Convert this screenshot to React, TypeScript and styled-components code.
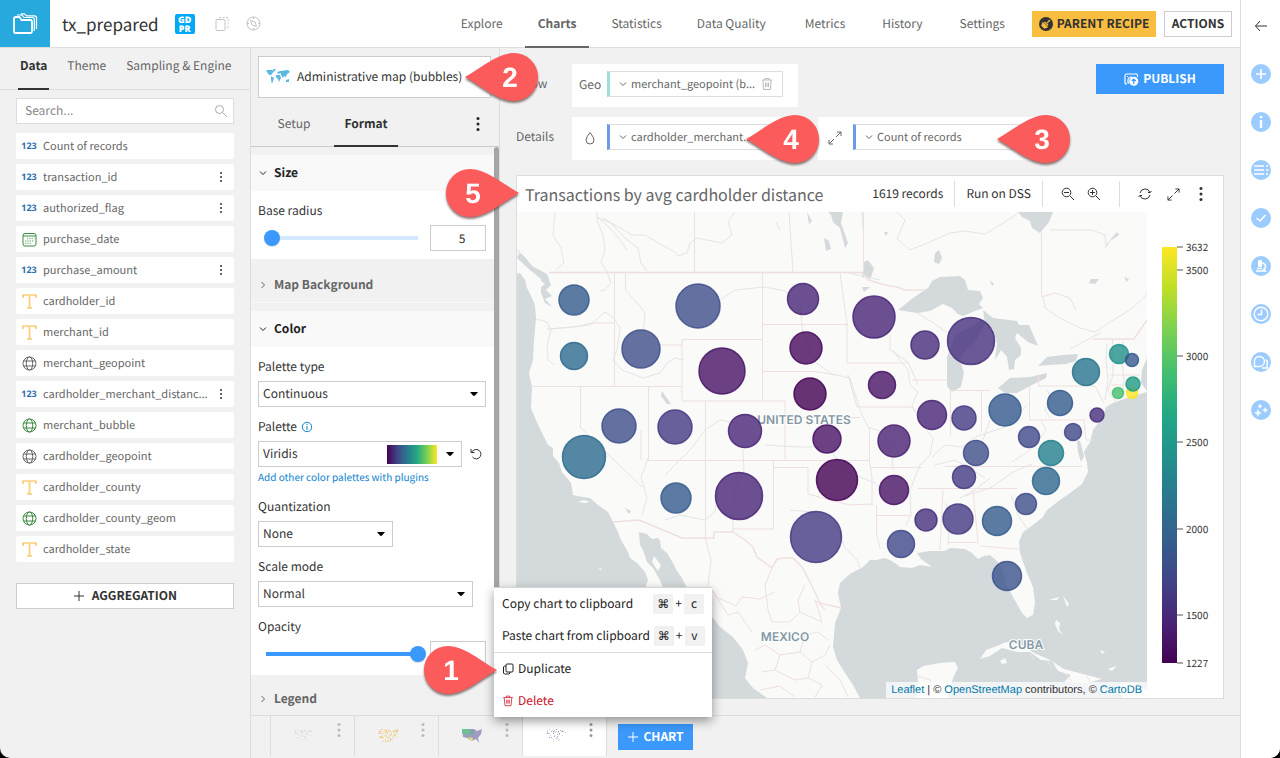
import React from "react";
import styled, { createGlobalStyle, css } from "styled-components";

const sans = `"Noto Sans CJK SC", "Open Sans", sans-serif`;
const line = "#dddddd";
const blue = "#3b99fc";

const GlobalStyle = createGlobalStyle`
  *, *::before, *::after { box-sizing: border-box; }
  body { margin: 0; background: #000; font-family: ${sans}; font-size: 12px; line-height: 20px; color: #666; text-rendering: geometricPrecision; }
  button, input, select { font: inherit; color: inherit; margin: 0; text-rendering: inherit; }
  a { text-decoration: none; }
`;

/* ---------- page frame ---------- */
const Shell = styled.div`
  position: relative;
  display: flex;
  min-height: 100vh;
  overflow: hidden;
  border-radius: 0 0 10px 10px;
  background: #f1f1f1;
`;
const Workspace = styled.div`
  flex: 1;
  min-width: 0;
  display: flex;
  flex-direction: column;
`;
const Body = styled.div`
  flex: 1;
  display: flex;
`;
const RightSide = styled.div`
  flex: 1;
  min-width: 0;
  display: flex;
  flex-direction: column;
`;
const Columns = styled.div`
  flex: 1;
  display: flex;
`;

/* ---------- header ---------- */
const Header = styled.header`
  display: flex;
  align-items: center;
  height: 48px;
  padding-right: 8px;
  background: #fff;
  border-bottom: 1px solid ${line};
`;
const Logo = styled.a`
  display: grid;
  place-items: center;
  width: 50px;
  height: 47px;
  background: #28a9dd;
`;
const Title = styled.h1`
  margin: 0 16px 0 12px;
  font-size: 17px;
  font-weight: 400;
  line-height: 28px;
  color: #333;
`;
const Tag = styled.span`
  width: 20px;
  height: 20px;
  padding-top: 1px;
  border-radius: 2px;
  background: #03a9f4;
  color: #fff;
  font: 800 9px/9px "Open Sans", sans-serif;
  text-align: center;
`;
const HeaderIcons = styled.div`
  display: flex;
  gap: 16px;
  margin-left: 20px;
`;
const Nav = styled.nav`
  display: flex;
  gap: 13px;
  align-self: stretch;
  margin-left: auto;
  margin-right: 14px;
`;
const NavGroup = styled.div<{ $gap: number }>`
  display: flex;
  gap: ${(p) => p.$gap}px;
`;
const NavLink = styled.a<{ $active?: boolean }>`
  height: 48px;
  padding: 0 13px;
  line-height: 47px;
  color: #666;
  border-bottom: 2px solid transparent;
  ${(p) => p.$active && css`font-weight: 700; border-color: #666;`}
`;
const Button = styled.button<{ $tone?: "gold" | "blue"; $width?: number; $height?: number }>`
  display: inline-flex;
  align-items: center;
  justify-content: center;
  gap: 4px;
  height: ${(p) => p.$height ?? 26}px;
  width: ${(p) => (p.$width ? p.$width + "px" : "100%")};
  padding: 0;
  border: 1px solid #ccc;
  background: #fff;
  color: #333;
  font-weight: 700;
  white-space: nowrap;
  ${(p) => p.$tone === "gold" && css`background: #f9be40; border-color: #f9be40;`}
  ${(p) => p.$tone === "blue" && css`background: ${blue}; border-color: ${blue}; color: #fff;`}
`;
const HeaderActions = styled.div`
  display: flex;
  gap: 8px;
`;

/* ---------- field list ---------- */
const Side = styled.aside`
  width: 251px;
  border-right: 1px solid ${line};
  flex-shrink: 0;
`;
const Tabs = styled.div<{ $height: number }>`
  display: flex;
  height: ${(p) => p.$height}px;
  border-bottom: 1px solid #ccc;
`;
const SideTabs = styled(Tabs)`
  gap: 16px;
  padding-left: 18px;
  border-color: ${line};
`;
const Tab = styled.button<{ $active?: boolean; $pad: number }>`
  margin-bottom: -1px;
  padding: 0 ${(p) => p.$pad}px;
  border: 0;
  border-bottom: 2px solid transparent;
  background: none;
  color: #666;
  white-space: nowrap;
  ${(p) => p.$active && css`font-weight: 700; color: #333; border-color: #333;`}
`;
const SideTab = styled(Tab)`
  padding-bottom: 4px;
`;
const SideContent = styled.div`
  padding: 8px 16px;
`;
const SearchBox = styled.label`
  display: flex;
  align-items: center;
  height: 26px;
  padding: 0 5px 0 8px;
  margin-bottom: 9px;
  background: #fff;
  border: 1px solid ${line};
`;
const SearchInput = styled.input`
  flex: 1;
  min-width: 0;
  padding: 0;
  border: 0;
  outline: 0;
  background: none;
  &::placeholder { color: #888; }
`;
const FieldList = styled.ul`
  display: grid;
  grid-template-columns: minmax(0, 1fr);
  gap: 5px;
  margin: 0 0 21px;
  padding: 0;
  list-style: none;
`;
const Field = styled.li`
  display: flex;
  align-items: center;
  height: 26px;
  padding: 0 5px;
  background: #fff;
  border-radius: 2px;
  font-size: 11px;
`;
const FieldType = styled.span`
  display: grid;
  place-items: center;
  flex-shrink: 0;
  width: 16px;
  margin-right: 6px;
  color: #2a6fb0;
  font: 700 9px/14px "Open Sans", sans-serif;
`;
const FieldName = styled.span`
  flex: 1;
  min-width: 0;
  overflow: hidden;
  white-space: nowrap;
`;
const IconButton = styled.button`
  display: grid;
  place-items: center;
  flex-shrink: 0;
  padding: 0;
  border: 0;
  background: none;
  color: inherit;
`;

/* ---------- options panel ---------- */
const Options = styled.section`
  display: flex;
  flex-direction: column;
  width: 249px;
  flex-shrink: 0;
  border-right: 1px solid ${line};
`;
const ChartType = styled.button`
  display: flex;
  align-items: center;
  gap: 7px;
  height: 42px;
  margin: 8px 8px 4px 7px;
  padding: 0 7px;
  border: 1px solid #ccc;
  background: #fff;
  color: #333;
  white-space: nowrap;
`;
const OptionTabs = styled(Tabs)`
  padding: 0 18px 0 11px;
  gap: 8px;
`;
const OptionTab = styled(Tab)`
  width: 64px;
`;
const OptionMenu = styled(IconButton)`
  margin-left: auto;
  align-self: center;
  color: #222;
`;
const ScrollArea = styled.div`
  display: flex;
  flex: 1;
`;
const Sections = styled.div`
  flex: 1;
  min-width: 0;
  padding-top: 8px;
`;
const ScrollBar = styled.div`
  width: 5px;
  border-radius: 3px 3px 0 0;
  background: #a5a5a5;
`;
const SectionHead = styled.button<{ $open?: boolean; $height: number }>`
  display: flex;
  align-items: center;
  gap: 6px;
  width: 100%;
  height: ${(p) => p.$height}px;
  padding: 0 7px;
  border: 0;
  background: none;
  color: #666;
  font-size: 12px;
  font-weight: 700;
  ${(p) => (p.$open ? css`background: #f9f9f9; color: #222;` : css`padding-top: 8px;`)}
`;
const Divider = styled.div`
  height: 9px;
  border-top: 1px solid #f8f8f8;
`;
const SectionBody = styled.div`
  display: flex;
  flex-direction: column;
  gap: 10px;
  padding: 10px 8px 8px 7px;
  background: #fff;
  color: #333;
`;
const Control = styled.div`
  display: flex;
  flex-direction: column;
  align-items: flex-start;
`;
const ControlLabel = styled.label`
  display: flex;
  align-items: center;
  gap: 4px;
  margin-bottom: 4px;
`;
const ControlRow = styled.div`
  display: flex;
  align-items: center;
  width: 100%;
  gap: 4px;
`;
const SelectBox = styled.div<{ $width: number }>`
  display: grid;
  align-items: center;
  width: ${(p) => p.$width}px;
  max-width: 100%;
  & > * { grid-area: 1 / 1; }
`;
const Select = styled.select`
  appearance: none;
  width: 100%;
  height: 26px;
  padding: 0 24px 0 4px;
  border: 1px solid #ccc;
  border-radius: 0;
  background: #fff;
`;
const SelectEnd = styled.span`
  display: flex;
  align-items: center;
  gap: 8px;
  justify-self: end;
  padding-right: 7px;
  pointer-events: none;
`;
const Swatch = styled.span`
  width: 50px;
  height: 19px;
  background: linear-gradient(90deg, #440154, #414487 20%, #2a788e 40%, #22a884 60%, #7ad151 80%, #fde725);
`;
const ResetButton = styled(IconButton)`
  margin-left: 4px;
`;
const Note = styled.a`
  font-size: 10px;
  color: #0b81ce;
`;
const Range = styled.input<{ $fill: number }>`
  appearance: none;
  flex: 1;
  min-width: 0;
  height: 26px;
  background: none;
  &::-webkit-slider-runnable-track {
    height: 16px;
    background: linear-gradient(90deg, ${blue} ${(p) => p.$fill}%, #d4e8ff ${(p) => p.$fill}%) center / calc(100% - 16px) 4px no-repeat;
  }
  &::-webkit-slider-thumb {
    appearance: none;
    width: 16px;
    height: 16px;
    border-radius: 50%;
    background: ${blue};
    box-shadow: 0 1px 1px rgba(0, 0, 0, 0.15);
  }
`;
const NumberInput = styled.input`
  width: 56px;
  height: 26px;
  padding: 0 0 0 8px;
  border: 1px solid #ccc;
  text-align: center;
`;

/* ---------- chart area ---------- */
const Main = styled.main`
  flex: 1;
  min-width: 0;
  display: flex;
  flex-direction: column;
  padding: 16px 16px;
`;
const Dimensions = styled.div`
  display: flex;
  justify-content: space-between;
  align-items: flex-start;
  margin-bottom: 15px;
`;
const DimensionRows = styled.div`
  display: grid;
  gap: 10px;
`;
const DimensionRow = styled.div`
  display: flex;
  gap: 20px;
`;
const DimensionName = styled.span`
  width: 36px;
  line-height: 40px;
`;
const DropZone = styled.div`
  display: flex;
  width: 226px;
  height: 43px;
  padding: 7px 15px 10px 7px;
  background: #fff;
`;
const ZoneHint = styled.span`
  display: flex;
  align-items: center;
  width: 28px;
  padding-top: 2px;
`;
const Pill = styled.button<{ $color: string }>`
  display: flex;
  align-items: center;
  gap: 3px;
  flex: 1;
  min-width: 0;
  height: 26px;
  padding: 0 8px;
  border: 1px solid ${line};
  border-left: 3px solid ${(p) => p.$color};
  background: #fff;
  color: #666;
  font-size: 11px;
  text-align: left;
`;
const Card = styled.section`
  flex: 1;
  display: flex;
  flex-direction: column;
  border: 1px solid ${line};
  background: #fff;
`;
const CardHead = styled.div`
  display: flex;
  align-items: center;
  height: 36px;
  padding: 0 16px 0 8px;
  color: #333;
`;
const CardTitle = styled.h2`
  flex: 1;
  margin: 0;
  font-size: 16px;
  font-weight: 400;
  line-height: 24px;
  color: #666;
  white-space: nowrap;
`;
const HeadGroup = styled.div<{ $last?: boolean; $gap?: number }>`
  display: flex;
  align-items: center;
  gap: ${(p) => p.$gap ?? 12}px;
  height: 26px;
  padding: 0 11px;
  border-right: 1px solid ${line};
  white-space: nowrap;
  ${(p) => p.$last && css`padding: 0 0 0 18px; border: 0;`}
`;
const ZoomGroup = styled(HeadGroup)`
  padding: 0 18px;
`;
const CardMenu = styled(IconButton)`
  width: 12px;
`;
const CardBody = styled.div`
  flex: 1;
  display: flex;
`;
const MapFrame = styled.div`
  position: relative;
  flex: 1;
  min-width: 0;
  display: flex;
  background: #d4d9dc;
`;
const MapSvg = styled.svg`
  display: block;
  width: 100%;
  height: auto;
  font: 600 12px Inter, sans-serif;
`;
const Attribution = styled.div`
  position: absolute;
  right: 0;
  bottom: 0;
  padding: 0 5px;
  background: rgba(255, 255, 255, 0.7);
  font: 11px/16px "Liberation Sans", Arial, sans-serif;
  color: #333;
  a { color: #0078a8; }
`;
const LegendSvg = styled.svg`
  display: block;
  width: 76px;
  flex-shrink: 0;
  font: 10px ${sans};
`;

/* ---------- chart tabs ---------- */
const BottomBar = styled.footer`
  display: flex;
  height: 43px;
  padding-left: 19px;
  border-top: 1px solid ${line};
`;
const ChartTab = styled.div<{ $active?: boolean }>`
  position: relative;
  display: flex;
  justify-content: space-between;
  width: 84px;
  height: 40px;
  padding: 7px 12px 0 22px;
  border-left: 1px solid ${line};
  color: #bbb;
  ${(p) => p.$active && css`background: #fff; box-shadow: 1px 0 ${line}; color: #999;`}
`;
const AddChart = styled.div`
  padding: 8px 12px;
`;
const Menu = styled.div`
  position: absolute;
  left: -29px;
  bottom: 39px;
  z-index: 2;
  width: 218px;
  background: #fff;
  border-top: 1px solid #d5d5d5;
  box-shadow: 0 4px 10px rgba(0, 0, 0, 0.4);
`;
const MenuItem = styled.button<{ $danger?: boolean }>`
  display: flex;
  align-items: center;
  gap: 4px;
  width: 100%;
  height: 32px;
  padding: 0 8px;
  border: 0;
  background: none;
  color: ${(p) => (p.$danger ? "#ce1228" : "#222")};
  white-space: nowrap;
`;
const MenuDivider = styled.div`
  height: 1px;
  background: ${line};
`;
const Keys = styled.span`
  display: flex;
  align-items: center;
  gap: 2px;
  margin-left: auto;
`;
const Key = styled.kbd<{ $symbol?: boolean }>`
  width: 20px;
  height: 20px;
  background: #f1f1f1;
  font: 12px/20px ${(p) => (p.$symbol ? `"DejaVu Sans", sans-serif` : sans)};
  text-align: center;
`;

/* ---------- right rail ---------- */
const Rail = styled.nav`
  display: flex;
  flex-direction: column;
  align-items: center;
  gap: 28px;
  width: 40px;
  flex-shrink: 0;
  padding-top: 16px;
  background: #fff;
  border-left: 1px solid ${line};
`;
const RailButton = styled(IconButton)`
  width: 20px;
  height: 20px;
  color: #9ccbff;
`;

/* ---------- numbered markers ---------- */
const Marker = styled.svg<{ $x: number; $y: number }>`
  position: absolute;
  z-index: 3;
  left: ${(p) => p.$x}px;
  top: ${(p) => p.$y}px;
  width: 73px;
  height: 48px;
  overflow: visible;
  filter: drop-shadow(0 2px 1px rgba(90, 60, 60, 0.7));
  font: 700 28px "Liberation Sans", Arial, sans-serif;
`;

/* ---------- icons ---------- */
type IconProps = { size?: number; box?: string; width?: number; children: React.ReactNode };
const Icon = ({ size = 14, box = "0 0 14 14", width = 1, children }: IconProps) => (
  <svg width={size} height={size} viewBox={box} fill="none" stroke="currentColor" strokeWidth={width} strokeLinejoin="round" aria-hidden="true">
    {children}
  </svg>
);
const Dots = ({ size = 12, r = 1 }: { size?: number; r?: number }) => (
  <svg width="6" height={size} viewBox={`0 0 6 ${size}`} fill="currentColor" aria-hidden="true">
    <circle cx="3" cy={r} r={r} />
    <circle cx="3" cy={size / 2} r={r} />
    <circle cx="3" cy={size - r} r={r} />
  </svg>
);
const Chevron = ({ open }: { open?: boolean }) => (
  <Icon size={10} box="0 0 10 10">
    <path d={open ? "M2 3.5L5 6.5L8 3.5" : "M3.5 2L6.5 5L3.5 8"} />
  </Icon>
);
const Caret = () => (
  <svg width="10" height="6" viewBox="0 0 10 6" aria-hidden="true">
    <path d="M1 1H9L6 4.600Q5 5.400 4 4.600Z" fill="#000" />
  </svg>
);
const Trash = ({ size = 13 }: { size?: number }) => (
  <Icon size={size}>
    <path d="M1.500 3H12.500M5 3V1.300H9V3M2.500 3L3.500 12.500H10.500L11.500 3M5.500 5.500V10M7 5.500V10M8.500 5.500V10" strokeWidth="0.900" />
  </Icon>
);
const Expand = ({ size = 14 }: { size?: number }) => (
  <Icon size={size}>
    <path d="M8 6L13 1M9 1H13V5M6 8L1 13M1 9V13H5" />
  </Icon>
);
const Plus = () => (
  <Icon size={12} box="0 0 12 12">
    <path d="M6 1V11M1 6H11" />
  </Icon>
);
const Magnifier = ({ plus }: { plus?: boolean }) => (
  <Icon>
    <circle cx="5.500" cy="5.500" r="4.300" />
    <path d={plus ? "M9 9L13 13M3 5.500H8M5.500 3V8" : "M9 9L13 13M3 5.500H8"} />
  </Icon>
);
const Globe = ({ color }: { color: string }) => (
  <svg width="15" height="15" viewBox="0 0 15 15" fill="none" stroke={color} strokeWidth="1" aria-hidden="true">
    <circle cx="7.500" cy="7.500" r="6.500" />
    <ellipse cx="7.500" cy="7.500" rx="3.200" ry="6.500" />
    <path d="M1.500 5H13.500M1.500 10H13.500" />
  </svg>
);
const Calendar = () => (
  <svg width="15" height="15" viewBox="0 0 15 15" fill="none" stroke="#3c8b42" aria-hidden="true">
    <rect x="1" y="1.500" width="13" height="12.500" rx="2" />
    <path d="M1 4H14" />
    <path d="M5 6.500H12.500M3 9H12M3 11.300H9" stroke="#8fbf92" strokeWidth="1.300" strokeDasharray="1.300 1" />
  </svg>
);
const TypeLetter = () => (
  <svg width="15" height="15" viewBox="0 0 15 15" fill="none" stroke="#f5b73c" aria-hidden="true">
    <path d="M1 4V1H14V4" strokeWidth="1.200" />
    <path d="M7.500 1V14" stroke="#fbd385" strokeWidth="2" />
    <path d="M5 14H10" />
  </svg>
);

type Kind = "num" | "date" | "text" | "point" | "geom";
const FieldIcon = ({ kind }: { kind: Kind }) => {
  if (kind === "date") return <Calendar />;
  if (kind === "text") return <TypeLetter />;
  if (kind === "point") return <Globe color="#666" />;
  if (kind === "geom") return <Globe color="#3c8b42" />;
  return <>123</>;
};
const fields: { name: string; kind: Kind; menu?: boolean }[] = [
  { name: "Count of records", kind: "num" },
  { name: "transaction_id", kind: "num", menu: true },
  { name: "authorized_flag", kind: "num", menu: true },
  { name: "purchase_date", kind: "date" },
  { name: "purchase_amount", kind: "num", menu: true },
  { name: "cardholder_id", kind: "text" },
  { name: "merchant_id", kind: "text" },
  { name: "merchant_geopoint", kind: "point" },
  { name: "cardholder_merchant_distanc...", kind: "num", menu: true },
  { name: "merchant_bubble", kind: "geom" },
  { name: "cardholder_geopoint", kind: "point" },
  { name: "cardholder_county", kind: "text" },
  { name: "cardholder_county_geom", kind: "geom" },
  { name: "cardholder_state", kind: "text" },
];

/* ---------- map ---------- */
const bubbles: [number, number, number, string][] = [
  [574, 300, 15, "#335b8d"], [574, 356, 13.5, "#2d6a8e"], [641, 349, 19, "#3d4e8a"], [698, 306, 22, "#3d4e8a"],
  [722, 371, 23, "#471365"], [803, 299, 15.5, "#482475"], [806, 348, 16, "#460a5d"], [810, 394, 16, "#440154"],
  [874, 317, 21, "#482475"], [882, 385, 13.5, "#471365"], [925, 345, 14, "#472c7a"], [971, 341, 23.5, "#46307e"],
  [619, 426, 17, "#3d4e8a"], [675, 427, 17, "#443a83"], [745, 431, 16.500, "#482475"], [827, 439, 14, "#471365"],
  [584, 457, 21.500, "#2b6a8e"], [676, 498, 15, "#355a8d"], [739, 496, 23.500, "#482475"], [837, 480, 20.500, "#440154"],
  [816, 537, 25.500, "#443a83"], [932, 415, 14.500, "#482475"], [964, 418, 12, "#443a83"], [894, 441, 16, "#482071"],
  [894, 490, 14.500, "#471365"], [976, 453, 12.500, "#3d4e8a"], [964, 477, 11.500, "#443a83"], [1005, 410, 16, "#33598d"],
  [1060, 403, 12.500, "#335b8d"], [1086, 372, 13.500, "#27758e"], [1119, 354, 9.500, "#1f918b"], [1132, 360, 6.500, "#355a8d"],
  [1118, 393, 5.500, "#44bf70"], [1132, 393, 5.500, "#fde725"], [1133, 384, 7, "#209a86"], [1097, 415, 7, "#472d7b"],
  [1073, 432, 8.500, "#3f4788"], [1029, 437, 10.500, "#3f4788"], [1051, 453, 12.500, "#23808d"], [1046, 481, 13.500, "#2e678e"],
  [1026, 504, 10.500, "#3d4e8a"], [926, 520, 11, "#46307e"], [958, 519, 15, "#443a83"], [997, 521, 14.500, "#335b8d"],
  [901, 544, 13.500, "#3f4788"], [1007, 576, 14.500, "#3b528b"],
];

const BubbleMap = () => (
  <MapSvg viewBox="517 212 630 486" preserveAspectRatio="xMinYMin slice" role="img" aria-label="Bubble map of the United States">
    <rect x="517" y="212" width="630" height="486" fill="#fafaf8" />
    <g fill="#d4d9dc">
      <path d="M517 274L520 273L525 280L527 288L533 300L535 306L536 318L534 340L533 360L529 373L532 387L531 408L535 418L542 433L548 445L553 448L553 456L559 463L562 472L571 483L573 495L583 497L590 498L598 505L608 512L613 522L618 532L621 540L628 552L630 558L637 563L645 572L648 580L646 586L650 600L712 617L720 627L733 637L743 650L748 663L745 678L753 688L767 698L517 698Z" />
      <path d="M639 532L647 534L652 539L658 538L660 541L661 548L667 553L673 563L677 571L682 578L688 590L664 590L660 580L653 568L647 562L643 550L640 545Z" />
      <path d="M1147 392L1140 394L1127 398L1113 403L1106 407L1104 413L1102 418L1093 430L1090 442L1084 452L1087 463L1088 472L1082 484L1070 493L1060 500L1047 510L1043 517L1033 525L1023 532L1019 542L1020 553L1027 573L1033 587L1035 603L1033 615L1027 618L1022 613L1012 595L1006 584L1003 570L998 562L990 555L984 556L978 559L972 553L965 549L950 548L945 551L930 551L917 553L921 559L932 567L920 565L912 568L900 567L892 561L885 558L876 560L870 560L863 567L850 574L840 583L838 593L841 608L835 623L833 647L837 660L845 673L853 685L860 698L917 698L918 683L917 670L923 666L940 663L955 662L958 668L953 678L950 690L948 698L1147 698Z" />
      <path d="M1147 358L1142 370L1141 383L1147 391Z" />
      <path d="M1077 440L1080 441L1084 456L1081 462L1078 452Z" />
      <path d="M898 310L913 298L928 288L932 281L940 277L960 276L965 280L968 290L980 291L983 298L979 304L983 308L975 311L963 316L958 314L952 308L943 304L930 311L917 313Z" />
      <path d="M947 357L955 335L969 328L983 319L986 322L975 342L964 352L960 360L964 373L961 387L952 392L947 386Z" />
      <path d="M983 310L993 318L1017 321L1019 325L1029 325L1033 334L1038 346L1028 342L1017 333L1015 338L1021 348L1021 355L1015 360L1014 369L1009 370L1007 357L1001 350L995 360L997 343L993 330L985 323Z" />
      <path d="M998 388L1010 378L1030 377L1047 373L1046 378L1030 386L1017 393L1005 393Z" />
      <path d="M1038 366L1047 357L1063 355L1078 354L1076 361L1066 364L1050 365Z" />
      <path d="M1018 212H1053L1049 222L1040 233L1032 228L1030 221L1022 217Z" />
      <path d="M807 212L812 221L809 224ZM828 212H843L841 223L848 243L845 248L843 240L840 228L833 222L831 215ZM824 238L829 241L831 249L826 251ZM662 391L666 397L671 404L667 404L661 396Z" />
      <path d="M517 257L525 264L532 273L547 281L551 292L546 297L552 303L545 306L552 314L545 310L541 300L541 286L530 277L517 265L520 258Z" transform="translate(0 -7)" />
      <path d="M935 253L939 250L942 258L939 264L934 262ZM1106 245L1117 232L1119 235L1110 241L1105 249ZM864 262L868 260L874 268L870 280L866 276L862 278ZM862 287L870 287L864 292ZM884 232H888L886 236ZM990 280L994 284L992 286ZM1091 279L1099 279L1095 284L1089 283ZM1124 277L1129 279L1127 282ZM625 508L631 511L629 514Z" />
    </g>
    <path d="M524 274L541 281L545 284L541 287L535 285Z" fill="#fafaf8" />
    <g fill="#fafaf8">
      <path d="M980 659L986 650L997 646L1006 642L1022 645L1034 653L1050 660L1064 669L1083 674L1102 679L1087 683L1064 682L1071 675L1058 671L1052 661L1041 660L1030 652L1018 652L1002 648L990 656Z" />
      <path d="M1000 661L1005 658L1007 663L1002 664ZM1056 620L1060 623L1059 629L1063 635L1058 631L1055 624ZM1049 600L1059 597L1057 600ZM1063 596L1069 604L1067 607ZM1108 669L1117 666L1112 671ZM1100 650L1105 652L1102 654Z" />
      <path d="M1118 685L1131 682L1147 690V698H1122ZM654 556L661 565L658 571L652 562ZM600 567L602 570L599 569ZM578 502L585 503L590 502L584 500Z" />
    </g>
    <g fill="none" stroke="#f0dfe0" strokeWidth="1">
      <path d="M549 272.500H862L868 280L885 285L897 287L905 290L925 290M613 522L639 520L682 538H714V532H733L745 540L753 547L757 557L772 568L777 559L784 558L793 558L802 567L813 588L820 603L841 608M1093 339H1134L1138 333L1147 320" strokeWidth="1.400" />
      <path d="M694.500 212V272M789 212L793 272M863.500 212V272M614.500 273V387M625.500 273V290L639 305L645 313L643 333L655 345L682 345M682 339.500H762M682 339.500V401H785V460M762.500 273V401M530 386.500H682M580.500 387V427M648.500 387V460M580 427L642 487M705.500 401V538M648 460.500H869M762 324.500H848M762 371.500H815L835 375M785 417.500H860M840 273L847 324V363H907M848 375L857 407H912L915 412M869.500 427V460L872 478V505M773.500 460V529H732M773 467.500H808V494L830 500L850 505L873 504" />
      <path d="M876.500 505V533L880 548M877 515.500H911M870 467.500H922M918 488.500H1017M943 490L940 550M973 490L978 542M948 542.500H978M980 546L1018 549M950.500 390V435M981.500 390V432M950 390.500H990M1029.500 387V420H1085M1038.500 376V386H1095L1104 403M945 466.500H1082M1112.500 339L1113 375L1108 390L1116 402M1110 375H1140M1112 385H1132M1084 420L1086 440H1093M890 335V350L908 362L918 385M912 380H948M1041.500 230V297L1055 293L1070 298L1076 310M641 430V460M547 329L575 327L592 323L614 323" />
      <path d="M705 538L711 560L708 585L716 597L736 606L742 597L760 599L775 592M772 568L765 585L768 610L772 622L790 622L800 612L798 600L805 585M712 590L728 615L738 612L752 632M800 612L822 622L815 600L825 610L820 603M755 650L765 645L780 655L775 670L762 672M780 655L800 652L812 662L825 655L830 645M800 652L805 635L818 632L828 640M812 662L808 678L822 685L815 697M775 670L795 680L808 678M760 690L780 686L795 697M825 665L840 680L848 697M1030 653L1034 660M1048 662L1052 668M1064 673L1072 681M1087 676L1090 682M917 676L930 680L935 698" />
      <path d="M597 217L612 224L625 238L638 248L641 263L647 271M917 313L932 322L946 332M990 420L983 440M1041 421L1046 430L1030 450L1012 462M965 496L990 488L1013 472L1032 464" />
    </g>
    <g fill="none" stroke="#e3e6e6" strokeWidth="1">
      <path d="M555 212L553 235L561 248L564 263L556 270M597 212V220L603 235L605 250L601 262L607 272M597 217L610 228L620 240L627 250M603 218L632 235L645 235L660 244L675 252L678 256L687 253L690 243L697 238L712 241L722 243L732 235L728 222L735 212" />
      <path d="M536 319L547 322L551 330L547 345L548 360L555 365M551 329L590 325L605 312L614 318L620 328L617 350L613 360L622 370L643 378L660 373L668 362L675 358L684 360M607 272L611 283L605 290L600 291M720 300L735 290L765 287L785 291L800 305L803 335L815 362L832 374L850 378L857 400L862 415L868 427L882 432L892 455L893 470M648 458L641 477L647 498L642 515M665 475L690 450L705 430L720 420L745 425M743 450L744 470L735 490L733 520L733 532M665 520L680 515L705 520L715 512L718 490M765 445L800 447L830 447L842 470L875 483L893 500M790 510L812 512L838 530L845 548L857 560L860 568M849 273L880 280M862 212L863 230M897 239L905 220L897 212M897 239L910 250L930 242L950 233L965 231L985 234L1005 222L1018 213M1050 230H1092L1105 235L1106 245M1043 297L1045 308L1060 318L1080 328L1095 332L1110 322L1130 310L1147 295M1070 349L1085 341L1100 333" />
      <path d="M893 350L900 360L908 370L910 385L918 392L912 405L922 425L933 438L930 455L920 465L910 490L911 515L906 525M932 457L945 445L962 447L975 437L990 432L1005 427L1018 415L1027 405M935 465L955 460L972 470L985 478M946 503L950 520L948 545M960 498L975 490L990 478M1047 390L1052 400L1045 410L1050 418M1107 343L1106 360L1108 380L1105 400M1123 342L1122 360L1124 380L1122 395M1011 495L1018 515L1028 530M780 230L776 222" />
    </g>
    <g fill="#8398a5" stroke="#fff" strokeWidth="2" paintOrder="stroke" textAnchor="middle">
      <text x="804" y="424">UNITED STATES</text>
      <text x="785" y="641">MEXICO</text>
      <text x="1026" y="649">CUBA</text>
    </g>
    <g strokeWidth="1.500">
      {bubbles.map(([x, y, r, color]) => (
        <circle key={`${x}-${y}`} cx={x} cy={y} r={r} fill={color} fillOpacity="0.8" stroke={color} strokeOpacity="0.85" />
      ))}
    </g>
  </MapSvg>
);

const ticks: [number, string][] = [[247, "3632"], [270, "3500"], [356, "3000"], [442, "2500"], [529, "2000"], [615, "1500"], [663, "1227"]];
const ColorLegend = () => (
  <LegendSvg viewBox="1147 212 76 486" preserveAspectRatio="xMinYMin meet" role="img" aria-label="Color scale">
    <defs>
      <linearGradient id="viridis" x1="0" x2="0" y1="1" y2="0">
        {["#440154", "#482475", "#414487", "#355f8d", "#2a788e", "#21918c", "#22a884", "#44bf70", "#7ad151", "#bddf26", "#fde725"].map((c, i) => (
          <stop key={c} offset={i / 10} stopColor={c} />
        ))}
      </linearGradient>
    </defs>
    <rect x="1162" y="247" width="15" height="416" fill="url(#viridis)" />
    {ticks.map(([y, label]) => (
      <g key={label}>
        <path d={`M1177 ${y}H1183`} stroke="#555" />
        <text x="1186" y={y + 4} fill="#333">{label}</text>
      </g>
    ))}
  </LegendSvg>
);

const markers = [
  { label: "1", x: 424, y: 646, right: true },
  { label: "2", x: 465, y: 53 },
  { label: "3", x: 997, y: 115 },
  { label: "4", x: 746, y: 115 },
  { label: "5", x: 446, y: 169, right: true },
];

/* ---------- chart thumbnails ---------- */
const dotColors: Record<string, string[]> = {
  mint: ["#c4e2d9", "#dcdfe3", "#e6dada"],
  amber: ["#f6dc8a", "#f3c3a4", "#e4e3a0"],
  violet: ["#a9a4c6", "#c3cbd6", "#d9cfdf"],
};
const scatter = (i: number, salt: number) => {
  const v = Math.sin((i + 1) * salt) * 10000;
  return v - Math.floor(v);
};
const DotThumb = ({ tone, count = 45 }: { tone: string; count?: number }) => (
  <svg width="22" height="18" viewBox="0 0 22 18" aria-hidden="true">
    {Array.from({ length: count }, (_, i) => {
      const x = 1 + Math.floor(scatter(i, 12.9) * 20);
      const depth = x < 5 ? 9 : x > 17 ? 8 : 13;
      const y = 2 + Math.floor(scatter(i, 78.2) * depth);
      return <rect key={i} x={x} y={y} width="1" height="1" fill={dotColors[tone][i % 3]} />;
    })}
  </svg>
);
const AreaThumb = () => (
  <svg width="22" height="18" viewBox="0 0 22 18" aria-hidden="true">
    <path d="M1 2L13 2L16 4L21 2L20 7L17 11L18 16L15 12L11 14L6 11L2 10Z" fill="#9f9bc1" />
    <path d="M1 2L9 2L8 7L4 8L1 6Z" fill="#6fbf95" />
    <path d="M9 3L13 3L13 8L9 8Z" fill="#76a9a0" />
    <path d="M7 10L12 11L11 15Z" fill="#e8e07a" />
  </svg>
);
const ThumbBox = styled.span`
  padding-top: 4px;
  line-height: 0;
`;
const TabDots = styled(IconButton)`
  align-self: flex-start;
`;

/* ---------- right rail glyphs ---------- */
const RailGlyphs: [string, React.ReactNode][] = [
  ["Add", <path d="M10 5V15M5 10H15" />],
  ["Information", <path d="M10 8V16M10 4V6.200" strokeWidth="2.400" />],
  ["Details", <path d="M3 6H13M3 10H13M3 14H13M15 6H17M15 10H17.500M15 14H17" />],
  ["Checks", <path d="M5.500 10L9 13L14.500 7" />],
  ["Lab", <><rect x="7" y="4" width="4" height="7" rx="1" fill="#fff" stroke="none" /><path d="M11 7Q15 8 14.500 11Q14 13.500 12 14M5 15H15.500M6 12.500H11" strokeWidth="1.500" /></>],
  ["History", <><circle cx="10" cy="10" r="6.800" strokeWidth="1.500" /><path d="M10.500 5.500V10.500H6.500" strokeWidth="1.500" /></>],
  ["Discussions", <path d="M3.500 14.500V8.500A5 5 0 1 1 8.500 14.500ZM15 7.500Q17.500 10 16 13L16.500 16H11" strokeWidth="1.400" />],
  ["Assistant", <path d="M7 9.500Q7.400 12.600 10.500 13Q7.400 13.400 7 16.500Q6.600 13.400 3.500 13Q6.600 12.600 7 9.500ZM9 4Q9.200 6 11 6.200Q9.200 6.400 9 8.400Q8.800 6.400 7 6.200Q8.800 6 9 4ZM14.200 7.500Q14.500 9.800 16.800 10Q14.500 10.200 14.200 12.500Q13.900 10.200 11.600 10Q13.900 9.800 14.200 7.500Z" fill="#fff" strokeWidth="0.500" />],
];

export default function App() {
  return (
    <Shell>
      <GlobalStyle />
      <Workspace>
        <Header>
          <Logo href="#" aria-label="Datasets">
            <svg width="26" height="22" viewBox="0 0 26 22" fill="none" stroke="#fff" strokeLinejoin="round">
              <path d="M3.500 4H7.500L9.500 7H18.500Q20 7 20 8.500V18.500Q20 20 18.500 20H3.500Q2 20 2 18.500V5.500Q2 4 3.500 4Z" strokeWidth="1.800" />
              <path d="M5 2H10L12 4.500H20.500Q22.300 4.500 22.300 6.500V18M9 0.800H12.500L14.500 2.800H22.500Q24.500 2.800 24.500 5V16" strokeWidth="1.200" />
            </svg>
          </Logo>
          <Title>tx_prepared</Title>
          <Tag>GD<br />PR</Tag>
          <HeaderIcons>
            <IconButton aria-label="Copy">
              <svg width="15" height="15" viewBox="0 0 15 15" fill="none" stroke="#c4c4c4">
                <rect x="1" y="3.500" width="9" height="11" rx="1" />
                <path d="M4 1.500H13V12H11" strokeDasharray="2 1.500" />
              </svg>
            </IconButton>
            <IconButton aria-label="Navigate">
              <svg width="15" height="15" viewBox="0 0 15 15" fill="none" stroke="#c4c4c4">
                <circle cx="7.500" cy="7.500" r="6.500" />
                <path d="M4.500 4.500L9 6L10.500 10.500L6 9ZM7.500 1V3M7.500 12V14M1 7.500H3M12 7.500H14" />
              </svg>
            </IconButton>
          </HeaderIcons>
          <Nav>
            <NavGroup $gap={9}>
              <NavLink href="#">Explore</NavLink>
              <NavLink href="#" $active>Charts</NavLink>
              <NavLink href="#">Statistics</NavLink>
              <NavLink href="#">Data Quality</NavLink>
            </NavGroup>
            <NavGroup $gap={11}>
              <NavLink href="#">Metrics</NavLink>
              <NavLink href="#">History</NavLink>
              <NavLink href="#">Settings</NavLink>
            </NavGroup>
          </Nav>
          <HeaderActions>
            <Button $tone="gold" $width={124}>
              <svg width="14" height="14" viewBox="0 0 14 14">
                <circle cx="7" cy="7" r="7" fill="#333" />
                <path d="M11 3L8 6M4 6L8 10L5.500 11L3 8.500ZM5.500 5L9 8.500" stroke="#f9be40" strokeWidth="1.300" fill="#f9be40" />
              </svg>
              PARENT RECIPE
            </Button>
            <Button $width={68}>ACTIONS</Button>
          </HeaderActions>
        </Header>

        <Body>
          <Side>
            <SideTabs $height={42}>
              <SideTab $active $pad={2}>Data</SideTab>
              <SideTab $pad={2}>Theme</SideTab>
              <SideTab $pad={2}>Sampling &amp; Engine</SideTab>
            </SideTabs>
            <SideContent>
              <SearchBox>
                <SearchInput type="search" placeholder="Search..." aria-label="Search fields" />
                <Icon size={14}>
                  <g stroke="#aaa">
                    <circle cx="5.500" cy="5.500" r="4" />
                    <path d="M8.500 8.500L13 13" />
                  </g>
                </Icon>
              </SearchBox>
              <FieldList>
                {fields.map((f) => (
                  <Field key={f.name}>
                    <FieldType><FieldIcon kind={f.kind} /></FieldType>
                    <FieldName>{f.name}</FieldName>
                    {f.menu && (
                      <IconButton aria-label={`${f.name} menu`}>
                        <svg width="16" height="12" viewBox="0 0 16 12" fill="#666">
                          <path d="M7 1h2v2h-2zM7 5h2v2h-2zM7 9h2v2h-2z" />
                        </svg>
                      </IconButton>
                    )}
                  </Field>
                ))}
              </FieldList>
              <Button><Plus />&nbsp;AGGREGATION</Button>
            </SideContent>
          </Side>

          <RightSide>
            <Columns>
              <Options>
                <ChartType>
                  <svg width="24" height="16" viewBox="0 0 24 16" fill="#5db9df">
                    <path d="M0 1L6 1L8 2L6 5L5 6L3 6L1 3ZM5 7L8 9L7 12L6 15L5 11ZM7 0H10L8 3ZM11 4L13 2L15 3L13 5ZM10 6L14 6L15 9L13 13L12 10L10 8ZM14 2L22 1L24 3L21 5L20 8L18 7L17 9L15 6ZM20 11L23 10L23 13L20 13Z" />
                  </svg>
                  Administrative map (bubbles)
                </ChartType>
                <OptionTabs $height={45}>
                  <OptionTab $pad={0}>Setup</OptionTab>
                  <OptionTab $pad={0} $active>Format</OptionTab>
                  <OptionMenu aria-label="Format menu"><Dots size={14} r={1.5} /></OptionMenu>
                </OptionTabs>
                <ScrollArea>
                  <Sections>
                    <SectionHead $open $height={36}><Chevron open />Size</SectionHead>
                    <SectionBody>
                      <Control>
                        <ControlLabel htmlFor="radius">Base radius</ControlLabel>
                        <ControlRow>
                          <Range id="radius" type="range" min="1" max="100" defaultValue="5" $fill={4} />
                          <NumberInput aria-label="Base radius value" defaultValue="5" />
                        </ControlRow>
                      </Control>
                    </SectionBody>
                    <SectionHead $height={43}><Chevron />Map Background</SectionHead>
                    <Divider />
                    <SectionHead $open $height={36}><Chevron open />Color</SectionHead>
                    <SectionBody>
                      <Control>
                        <ControlLabel htmlFor="ptype">Palette type</ControlLabel>
                        <SelectBox $width={228}>
                          <Select id="ptype"><option>Continuous</option></Select>
                          <SelectEnd><Caret /></SelectEnd>
                        </SelectBox>
                      </Control>
                      <Control>
                        <ControlLabel htmlFor="palette">
                          Palette
                          <svg width="12" height="12" viewBox="0 0 12 12" fill="none" stroke="#0b81ce" aria-hidden="true">
                            <circle cx="6" cy="6" r="4.700" />
                            <path d="M6 5V9M6 3V4" />
                          </svg>
                        </ControlLabel>
                        <ControlRow>
                          <SelectBox $width={204}>
                            <Select id="palette"><option>Viridis</option></Select>
                            <SelectEnd><Swatch /><Caret /></SelectEnd>
                          </SelectBox>
                          <ResetButton aria-label="Reset palette">
                            <Icon size={12} box="0 0 12 12"><path d="M1 1V4.500H4.500M1.500 4Q4 1 7 1.500A4.700 4.700 0 1 1 2.500 9" /></Icon>
                          </ResetButton>
                        </ControlRow>
                        <Note href="#">Add other color palettes with plugins</Note>
                      </Control>
                      <Control>
                        <ControlLabel htmlFor="quant">Quantization</ControlLabel>
                        <SelectBox $width={135}>
                          <Select id="quant"><option>None</option></Select>
                          <SelectEnd><Caret /></SelectEnd>
                        </SelectBox>
                      </Control>
                      <Control>
                        <ControlLabel htmlFor="scale">Scale mode</ControlLabel>
                        <SelectBox $width={215}>
                          <Select id="scale"><option>Normal</option></Select>
                          <SelectEnd><Caret /></SelectEnd>
                        </SelectBox>
                      </Control>
                      <Control>
                        <ControlLabel htmlFor="opacity">Opacity</ControlLabel>
                        <ControlRow>
                          <Range id="opacity" type="range" min="0" max="1" step="0.1" defaultValue="1" $fill={100} />
                          <NumberInput aria-label="Opacity value" />
                        </ControlRow>
                      </Control>
                    </SectionBody>
                    <SectionHead $height={40}><Chevron />Legend</SectionHead>
                  </Sections>
                  <ScrollBar />
                </ScrollArea>
              </Options>

              <Main>
                <Dimensions>
                  <DimensionRows>
                    <DimensionRow>
                      <DimensionName>Show</DimensionName>
                      <DropZone>
                        <ZoneHint>Geo</ZoneHint>
                        <Pill $color="#a0dfd6">
                          <Chevron open />
                          <FieldName>merchant_geopoint (b...</FieldName>
                          <svg width="14" height="14" viewBox="0 0 14 14" fill="none" stroke="#bbb"><path d="M2 3H12M5 3V1.500H9V3M3 3L3.500 12.500H10.500L11 3M5.500 5.500V10M7 5.500V10M8.500 5.500V10" /></svg>
                        </Pill>
                      </DropZone>
                    </DimensionRow>
                    <DimensionRow>
                      <DimensionName>Details</DimensionName>
                      <DropZone>
                        <ZoneHint>
                          <svg width="22" height="14" viewBox="0 0 22 14" fill="none" stroke="#666"><path d="M11 1.500Q15 6.500 15 9A4 4 0 0 1 7 9Q7 6.500 11 1.500Z" /></svg>
                        </ZoneHint>
                        <Pill $color="#6f9ae8">
                          <Chevron open />
                          <FieldName>cardholder_merchant...</FieldName>
                        </Pill>
                      </DropZone>
                      <DropZone>
                        <ZoneHint>
                          <svg width="20" height="14" viewBox="-3 0 20 14" fill="none" stroke="#666"><path d="M8 6L13 1M9 1H13V5M6 8L1 13M1 9V13H5" /></svg>
                        </ZoneHint>
                        <Pill $color="#6f9ae8">
                          <Chevron open />
                          <FieldName>Count of records</FieldName>
                        </Pill>
                      </DropZone>
                    </DimensionRow>
                  </DimensionRows>
                  <Button $tone="blue" $width={128} $height={30}>
                    <svg width="15" height="13" viewBox="0 0 15 13" fill="none" stroke="#fff" strokeWidth="1.200">
                      <path d="M3 11H2Q1 11 1 10V2.500Q1 1 2.500 1H12.500Q13.500 1 13.500 2.500V4M3 3.500H4M8 4Q4 4 4 7.500V10H5.500" />
                      <circle cx="9.800" cy="8.300" r="4.500" fill="#fff" stroke="none" />
                      <path d="M9.800 11V6.500M7.800 8L9.800 6L11.800 8" stroke={blue} />
                    </svg>
                    PUBLISH
                  </Button>
                </Dimensions>

                <Card>
                  <CardHead>
                    <CardTitle>Transactions by avg cardholder distance</CardTitle>
                    <HeadGroup>1619 records</HeadGroup>
                    <HeadGroup>Run on DSS</HeadGroup>
                    <ZoomGroup>
                      <IconButton aria-label="Zoom out"><Magnifier /></IconButton>
                      <IconButton aria-label="Zoom in"><Magnifier plus /></IconButton>
                    </ZoomGroup>
                    <HeadGroup $last $gap={15}>
                      <IconButton aria-label="Refresh">
                        <Icon size={14}><path d="M2 6A5.200 5.200 0 0 1 12 5.500M12 8A5.200 5.200 0 0 1 2 8.500M10 5.500H12.200L13.500 4M4 8.500H1.800L0.500 10" /></Icon>
                      </IconButton>
                      <IconButton aria-label="Full screen"><Expand size={13} /></IconButton>
                      <CardMenu aria-label="Chart menu"><Dots size={14} r={1.5} /></CardMenu>
                    </HeadGroup>
                  </CardHead>
                  <CardBody>
                    <MapFrame>
                      <BubbleMap />
                      <Attribution>
                        <a href="#">Leaflet</a> | © <a href="#">OpenStreetMap</a> contributors, © <a href="#">CartoDB</a>
                      </Attribution>
                    </MapFrame>
                    <ColorLegend />
                  </CardBody>
                </Card>
              </Main>
            </Columns>

            <BottomBar>
              <ChartTab><ThumbBox><DotThumb tone="mint" /></ThumbBox><TabDots aria-label="Chart 1 menu"><Dots size={14} r={1.5} /></TabDots></ChartTab>
              <ChartTab><ThumbBox><DotThumb tone="amber" count={110} /></ThumbBox><TabDots aria-label="Chart 2 menu"><Dots size={14} r={1.5} /></TabDots></ChartTab>
              <ChartTab><ThumbBox><AreaThumb /></ThumbBox><TabDots aria-label="Chart 3 menu"><Dots size={14} r={1.5} /></TabDots></ChartTab>
              <ChartTab $active>
                <ThumbBox><DotThumb tone="violet" /></ThumbBox>
                <TabDots aria-label="Chart 4 menu"><Dots size={14} r={1.5} /></TabDots>
                <Menu>
                  <MenuItem>Copy chart to clipboard<Keys><Key $symbol>⌘</Key>+<Key>c</Key></Keys></MenuItem>
                  <MenuItem>Paste chart from clipboard<Keys><Key $symbol>⌘</Key>+<Key>v</Key></Keys></MenuItem>
                  <MenuDivider />
                  <MenuItem>
                    <Icon size={12} box="0 0 12 12"><rect x="4" y="1" width="7" height="8" rx="1" /><path d="M4 3H2.500L1.500 4V10L2.500 11H7L8 10V9" /></Icon>
                    Duplicate
                  </MenuItem>
                  <MenuItem $danger><Trash size={12} />Delete</MenuItem>
                </Menu>
              </ChartTab>
              <AddChart><Button $tone="blue" $width={75}><Plus />CHART</Button></AddChart>
            </BottomBar>
          </RightSide>
        </Body>
      </Workspace>

      <Rail>
        <RailButton aria-label="Collapse">
          <svg width="14" height="12" viewBox="0 0 14 12" fill="none" stroke="#333"><path d="M6 1L1.500 6L6 11M1.500 6H13" /></svg>
        </RailButton>
        {RailGlyphs.map(([name, glyph]) => (
          <RailButton key={name} aria-label={name}>
            <svg width="20" height="20" viewBox="0 0 20 20">
              <circle cx="10" cy="10" r="10" fill="currentColor" />
              <g fill="none" stroke="#fff" strokeWidth="1.600">{glyph}</g>
            </svg>
          </RailButton>
        ))}
      </Rail>

      {markers.map((m) => (
        <Marker key={m.label} $x={m.x} $y={m.y} viewBox="0 0 73 48">
          <path
            transform={m.right ? "matrix(-1 0 0 1 73 0)" : undefined}
            d="M0 24C16 15 33 0 49 0A24 24 0 0 1 49 48C33 48 16 33 0 24Z"
            fill="#fb5b5b"
          />
          <text x={m.right ? 27 : 45} y="34" textAnchor="middle" fill="#fff">{m.label}</text>
        </Marker>
      ))}
    </Shell>
  );
}
